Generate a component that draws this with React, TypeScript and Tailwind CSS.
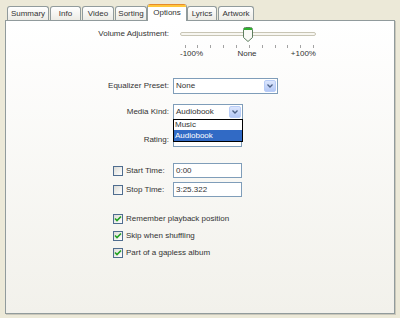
import React from 'react';

const tabs = [
  { label: 'Summary', w: 'w-[42px]' },
  { label: 'Info', w: 'w-[31px]' },
  { label: 'Video', w: 'w-[32px]' },
  { label: 'Sorting', w: 'w-[32px]' },
  { label: 'Options', w: 'w-[40px]', active: true },
  { label: 'Lyrics', w: 'w-[30px]' },
  { label: 'Artwork', w: 'w-[36px]' },
];

function Tab({ label, w, active }: { label: string; w: string; active?: boolean }) {
  if (active) {
    return (
      <div
        className={`${w} -mx-px h-[17px] -mb-px z-10 flex flex-col rounded-t-[3px] border-x border-[#919B9C] bg-white overflow-hidden`}
      >
        <div className="h-px bg-[#E68B2C]" />
        <div className="h-[2px] bg-[#FFC73C]" />
        <div className="flex-1 flex items-center justify-center pb-[2px]">{label}</div>
      </div>
    );
  }
  return (
    <div
      className={`${w} h-[14px] flex items-center justify-center rounded-t-[3px] border border-b-0 border-[#919B9C] bg-gradient-to-b from-white to-[#ECEBE5]`}
    >
      {label}
    </div>
  );
}

function DropButton() {
  return (
    <div className="absolute right-px top-px bottom-px w-[12px] rounded-[2px] border border-[#B9CDF7] bg-gradient-to-b from-[#DCE6FD] to-[#B4C8F6] flex items-center justify-center">
      <svg width="6" height="4" viewBox="0 0 6 4">
        <path d="M0.5 0.5 L3 3 L5.5 0.5" fill="none" stroke="#4D6185" strokeWidth="1.3" />
      </svg>
    </div>
  );
}

function Select({ value, w, children }: { value: string; w: string; children?: React.ReactNode }) {
  return (
    <div className={`${w} relative h-[16px] border border-[#7F9DB9] bg-white flex items-center pl-[2px]`}>
      {value}
      <DropButton />
      {children}
    </div>
  );
}

function Check({ checked }: { checked?: boolean }) {
  return (
    <div className="w-[10px] h-[10px] shrink-0 border border-[#4F6D8F] bg-gradient-to-br from-[#DCDCD7] to-white flex items-center justify-center">
      {checked && (
        <svg width="8" height="8" viewBox="0 0 8 8">
          <path d="M1 3.5 L3 5.5 L7 1.5" fill="none" stroke="#21A121" strokeWidth="1.6" />
        </svg>
      )}
    </div>
  );
}

function Field({ value }: { value: string }) {
  return (
    <div className="w-[69px] h-[15px] border border-[#7F9DB9] bg-white flex items-center pl-[2px]">{value}</div>
  );
}

export default function App() {
  const ticks = Array.from({ length: 11 }, (_, i) => 4.5 + i * 12.87);

  return (
    <div
      className="w-[400px] h-[318px] bg-[#ECE9D8] text-[8px] leading-none text-[#333] pt-[5px]"
      style={{ fontFamily: '"Liberation Sans", Arial, sans-serif' }}
    >
      <div className="flex items-end gap-px pl-[7px] h-[15px]">
        {tabs.map((t) => (
          <Tab key={t.label} {...t} />
        ))}
      </div>

      <div className="ml-[5px] w-[390px] h-[294px] border border-[#919B9C] bg-gradient-to-b from-white to-[#F2F1EB] shadow-[1px_1px_0_#C9C7BA] flex flex-col">
        {/* volume */}
        <div className="flex mt-[6px] h-[32px]">
          <div className="w-[163px] text-right pt-[3px]">Volume Adjustment:</div>
          <div className="ml-[11px] w-[136px] flex flex-col">
            <svg width="136" height="22" viewBox="0 0 136 22">
              <rect x="0.5" y="5.5" width="135" height="3" rx="1.5" fill="#F7F6F1" stroke="#C8C5B5" />
              {ticks.map((x) => (
                <line key={x} x1={Math.round(x) + 0.5} x2={Math.round(x) + 0.5} y1="18" y2="21" stroke="#A3A3A3" />
              ))}
              <path
                d="M63.5 2.5 Q63.5 0.5 65.5 0.5 H70.5 Q72.5 0.5 72.5 2.5 V10.5 L68 14.5 L63.5 10.5 Z"
                fill="#FAFAF7"
                stroke="#5E7E5E"
              />
              <rect x="64" y="1" width="8" height="2" fill="#2EB02E" />
            </svg>
            <div className="flex justify-between h-[10px] items-center">
              <span>-100%</span>
              <span>None</span>
              <span>+100%</span>
            </div>
          </div>
        </div>

        {/* equalizer */}
        <div className="flex items-center mt-[19px] h-[16px]">
          <div className="w-[163px] text-right">Equalizer Preset:</div>
          <div className="ml-[4px]">
            <Select value="None" w="w-[105px]" />
          </div>
        </div>

        {/* media kind */}
        <div className="flex items-center mt-[10px] h-[16px] relative z-10">
          <div className="w-[163px] text-right">Media Kind:</div>
          <div className="ml-[4px]">
            <Select value="Audiobook" w="w-[70px]">
              <div className="absolute left-[-1px] top-full w-[70px] h-[23px] border border-black bg-white flex flex-col">
                <div className="h-[10px] flex items-center pl-[1px]">Music</div>
                <div className="h-[11px] flex items-center pl-[1px] bg-[#316AC5] text-white">Audiobook</div>
              </div>
            </Select>
          </div>
        </div>

        {/* rating */}
        <div className="flex items-center mt-[12px] h-[15px]">
          <div className="w-[163px] text-right">Rating:</div>
          <div className="ml-[4px] w-[69px] h-[15px] border border-[#7F9DB9] bg-white" />
        </div>

        {/* start / stop */}
        <div className="flex items-center mt-[16px] h-[15px]">
          <div className="w-[167px] flex items-center gap-[3px] pl-[107px]">
            <Check />
            <span>Start Time:</span>
          </div>
          <Field value="0:00" />
        </div>
        <div className="flex items-center mt-[4px] h-[15px]">
          <div className="w-[167px] flex items-center gap-[3px] pl-[107px]">
            <Check />
            <span>Stop Time:</span>
          </div>
          <Field value="3:25.322" />
        </div>

        {/* options */}
        <div className="flex flex-col gap-[4px] mt-[15px] pl-[107px]">
          {['Remember playback position', 'Skip when shuffling', 'Part of a gapless album'].map((l) => (
            <div key={l} className="flex items-center gap-[3px] h-[13px]">
              <Check checked />
              <span>{l}</span>
            </div>
          ))}
        </div>
      </div>
    </div>
  );
}
